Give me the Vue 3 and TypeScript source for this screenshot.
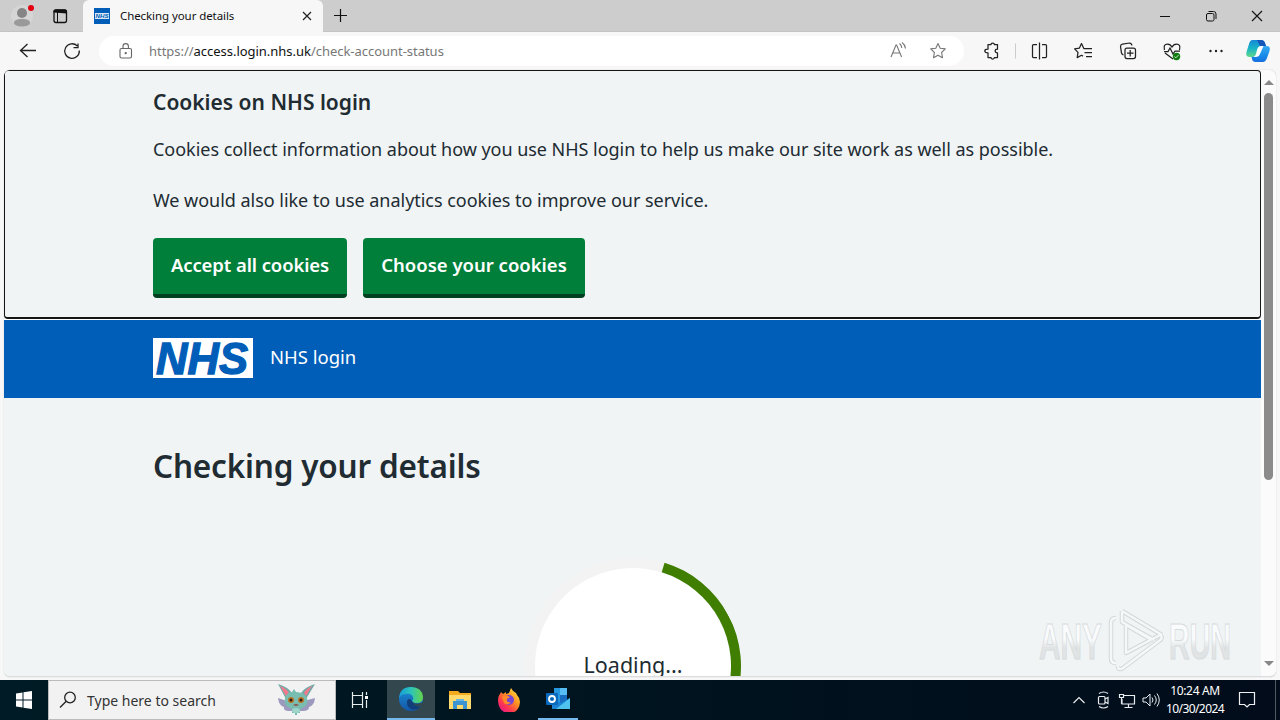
<script setup lang="ts">
interface Choice { label: string; cls: string }
const choices: Choice[] = [
  { label: 'Accept all cookies', cls: 'accept' },
  { label: 'Choose your cookies', cls: 'choose' },
]
</script>

<template>
  <div class="screen">
    <header class="tabs">
      <svg class="profile" width="83" height="32" viewBox="0 0 83 32">
        <circle cx="22" cy="16" r="11" fill="#dadada" opacity=".6" />
        <circle cx="22" cy="13" r="5" fill="#858585" />
        <path d="M14 23c0-3 3-4 8-4s8 1 8 4c0 2-4 3.500-8 3.500S14 25 14 23z" fill="#9a9a9a" />
        <circle cx="31" cy="8" r="3" fill="#e3000f" />
        <rect x="54" y="10" width="12.500" height="12.500" rx="2" fill="none" stroke="#111" stroke-width="1.300" />
        <path d="M53.500 12.500V11q0-1.500 2-1.500h9.500q2 0 2 1.500v2.500z" fill="#111" />
        <path d="M57.500 12v10" stroke="#111" />
      </svg>
      <div class="tab">
        <svg width="16" height="16" viewBox="0 0 16 16">
          <rect width="16" height="16" fill="#005eb8" />
          <rect x="1" y="5" width="14" height="6" fill="#dbe9f6" />
          <text x="1.500" y="10.300" class="mini" textLength="13" lengthAdjust="spacingAndGlyphs">NHS</text>
        </svg>
        <span class="tab-title">Checking your details</span>
        <svg class="close" width="10" height="10" viewBox="0 0 10 10"><path d="M1 1l8 8M9 1L1 9" stroke="#222" stroke-width="1.200" /></svg>
      </div>
      <svg class="plus" width="15" height="15" viewBox="0 0 15 15"><path d="M7.500 1v13M1 7.500h13" stroke="#111" stroke-width="1.200" /></svg>
      <svg class="winctl" width="120" height="32" viewBox="1160 0 120 32" fill="none" stroke="#111">
        <path d="M1160 16.500h10" />
        <rect x="1206.500" y="13.500" width="7.500" height="7.500" rx="1.500" />
        <path d="M1208.500 11.500h5q2.500 0 2.500 2.500v5" />
        <path d="M1252 11l10 10M1262 11l-10 10" stroke-width="1.100" />
      </svg>
    </header>

    <nav class="toolbar">
      <svg class="navicons" width="99" height="38" viewBox="0 32 99 38" fill="none" stroke="#222" stroke-width="1.300">
        <path d="M36 50.500H21M27.500 44l-7 6.500 7 6.500" />
        <path d="M77.300 46a7.300 7.300 0 1 0 2 4.500M78 43.500v4.200h-4.500" />
      </svg>
      <div class="address">
        <svg width="14" height="16" viewBox="0 0 14 16" fill="none" stroke="#666" stroke-width="1.100">
          <rect x="1" y="5.500" width="11.500" height="9.500" rx="1.500" />
          <path d="M4 5.500V3.300a2.700 2.700 0 0 1 5.400 0v2.200" />
          <circle cx="6.700" cy="10.200" r=".6" fill="#666" />
        </svg>
        <span class="url">https://<b>access.login.nhs.uk</b>/check-account-status</span>
        <svg class="readstar" width="60" height="22" viewBox="888 40 60 22" fill="none" stroke="#777" stroke-width="1.100">
          <path d="M891 57l5-12h.6l5 12M893 53h7M899.500 43.500q2 1.500 2.300 4.500M902 42.500q3 2 3.500 6" />
          <path d="M938 43.500l2.200 4.700 5.100.7-3.700 3.600.9 5.200-4.500-2.500-4.500 2.500.9-5.200-3.700-3.600 5.100-.7z" stroke-linejoin="round" />
        </svg>
      </div>
      <svg class="actions" width="316" height="38" viewBox="964 32 316 38" fill="none" stroke="#222" stroke-width="1.250">
        <defs>
          <linearGradient id="cp1" x1="0" y1="0" x2="0" y2="1"><stop stop-color="#1688d8" /><stop offset=".5" stop-color="#19b5c6" /><stop offset="1" stop-color="#62d889" /></linearGradient>
          <linearGradient id="cp2" x1="0" y1="0" x2="0" y2="1"><stop stop-color="#38a9f4" /><stop offset=".6" stop-color="#168be8" /><stop offset="1" stop-color="#176fe0" /></linearGradient>
        </defs>
        <path d="M988 44.500h3q0-1.500 1.700-1.500t1.700 1.500h3.100v4.700q-2.300 0-2.300 1.800t2.300 1.800v4.700h-3.100q0 1.500-1.700 1.500t-1.700-1.500h-3v-4.700q-3.200 0-3.200-1.800t3.200-1.800z" stroke-linejoin="round" />
        <path d="M1015.500 43.500v15" stroke="#ccc" stroke-width="1" />
        <path d="M1037 44.500h-3.500q-1 0-1 1v11q0 1 1 1h3.500M1042 44.500h3.500q1 0 1 1v11q0 1-1 1H1042M1039.500 42.500v17" />
        <path d="M1088 48.500h-4.200l-2.300-4.900-2.200 4.600-4.700.7 3.400 3.500-.8 5.200 4.300-2.300 1.500.8M1086 48.500h6M1084.500 52.500h7.500M1086 56.500h6" stroke-linejoin="round" />
        <rect x="1125" y="48" width="10.500" height="10.500" rx="2" /><path d="M1130.200 50v6.500M1127 53.200h6.500M1123.500 55q-1.500-.5-2-2l-1-6.500q0-2 2-2.300l7-1.200q2 0 2.500 2.500" />
        <path d="M1164.500 50q-1.500-6 3-6 3 0 4.500 3 1.500-3 4.500-3 4.500 0 3 6M1165 53l8 6M1164 51.500h4l2-3.500 3 6 2-3h5" />
        <circle cx="1176.500" cy="56.500" r="3.700" fill="#107c10" stroke="none" /><path d="M1174.500 56.500l1.300 1.400 2.700-2.800" stroke="#fff" stroke-width=".8" />
        <g fill="#222" stroke="none"><circle cx="1210.500" cy="51" r="1.200" /><circle cx="1216" cy="51" r="1.200" /><circle cx="1221.500" cy="51" r="1.200" /></g>
        <g stroke="none">
          <path d="M1252.500 40h8.500q3 0 4 3l1 3h-5q-2 0-3 3l-2 6q-1 2-4 2h-2q-5 0-3.500-5l2.500-8q1-4 3.500-4z" fill="url(#cp1)" />
          <path d="M1257 40h4q3 0 4 3l1 3h-6z" fill="#1656b9" />
          <path d="M1263.500 46h3q4.500 0 3 5l-2.500 7q-1.500 4-4 4h-7.500q-3 0-3.500-3l-.5-2q4 0 5-3l2-6q1-2 5-2z" fill="url(#cp2)" />
          <path d="M1257 50q1-4 4.500-4h2l-3.500 8q-1 3-4.500 3h-2q2-1 2.500-3z" fill="#fff" />
        </g>
      </svg>
    </nav>

    <section class="view">
      <main class="page">
        <div class="cookies">
          <h2>Cookies on NHS login</h2>
          <p class="p1">Cookies collect information about how you use NHS login to help us make our site work as well as possible.</p>
          <p class="p2">We would also like to use analytics cookies to improve our service.</p>
          <div class="buttons">
            <button v-for="c in choices" :key="c.cls" :class="c.cls">{{ c.label }}</button>
          </div>
        </div>
        <div class="brand">
          <svg width="100" height="40" viewBox="0 0 100 40">
            <rect width="100" height="40" fill="#fff" />
            <text x="3" y="36" class="nhs" textLength="92" lengthAdjust="spacingAndGlyphs">NHS</text>
          </svg>
          <span>NHS login</span>
        </div>
        <h1>Checking your details</h1>
        <div class="loader"><div class="ring"></div><span>Loading...</span></div>
      </main>
      <aside class="scroll">
        <i class="up"></i><i class="thumb"></i><i class="down"></i>
      </aside>
    </section>

    <svg class="mark" width="200" height="68" viewBox="1036 606 200 68">
      <defs>
        <linearGradient id="wm" x1="0" y1="0" x2="0" y2="1"><stop offset=".45" stop-color="#f9fbfc" /><stop offset=".6" stop-color="#e1e4e5" /></linearGradient>
      </defs>
      <text x="1039" y="659" textLength="63" lengthAdjust="spacingAndGlyphs">ANY</text>
      <text x="1169" y="659" textLength="62" lengthAdjust="spacingAndGlyphs">RUN</text>
      <path d="M1122 611l40 24M1122 611v11l32 18M1126 625v28l34-18q4 3-1 6l-36 27q-5 3-5-2M1126 625l24 14M1116 618q-5 0-5 5v36q0 4 5 4" fill="none" stroke="#d3d8da" stroke-width="4.500" stroke-linejoin="round" />
      <path d="M1122 611l40 24M1122 611v11l32 18M1126 625v28l34-18q4 3-1 6l-36 27q-5 3-5-2M1126 625l24 14M1116 618q-5 0-5 5v36q0 4 5 4" fill="none" stroke="#f5f8f9" stroke-width="2.500" stroke-linejoin="round" />
    </svg>

    <footer class="taskbar">
      <svg class="start" width="48" height="40" viewBox="0 680 48 40"><path d="M16 693.500l6.500-1v7H16zM23.500 692.300l8.500-1.200v8.400h-8.500zM16 700.500h6.500v7l-6.500-1zM23.500 700.500H32v8.400l-8.500-1.200z" fill="#fff" /></svg>
      <div class="search">
        <svg width="18" height="18" viewBox="0 0 18 18" fill="none" stroke="#222" stroke-width="1.300"><circle cx="11" cy="6.500" r="5.300" /><path d="M7.200 10.300L1 16.500" /></svg>
        <span>Type here to search</span>
        <svg class="creature" width="40" height="34" viewBox="276 684 40 34">
          <path d="M287 702l-9-3q1 8 6 9-1 4 5 4h14q6 0 6-4 5-1 6-9l-11 3z" fill="#9b99bd" />
          <path d="M286 700l-8-15q10 3 14 9zM306 700l9-15q-10 3-14 9z" fill="#73aaa7" />
          <path d="M286 697l-6-10q7 3 9 7zM306 697l6-10q-6 3-8 7z" fill="#f3798c" />
          <path d="M285 699q2-6 7-6l2-3 2 3q8 0 11 6 2 6-3 9-3 2-4 2v4h-3v2h-2v-2h-3v-4q-9-3-7-11z" fill="#79bcb0" />
          <circle cx="291" cy="701" r="3" fill="#b97427" /><circle cx="301" cy="701" r="3" fill="#b97427" />
          <circle cx="291" cy="701" r="1.500" fill="#321b15" /><circle cx="301" cy="701" r="1.500" fill="#321b15" />
          <path d="M293 706q3-2 6 0l-3 1z" fill="#8f514b" /><ellipse cx="296" cy="711.500" rx="4" ry="2.500" fill="#a0d5cb" />
        </svg>
      </div>
      <svg width="51" height="40" viewBox="336 680 51 40" fill="none" stroke="#e7eced" stroke-width="1.200"><path d="M352.500 692v3.500h10V692M352.500 708v-3.500h10v3.500M352.500 695.500v9M362.500 695.500v9M366.500 692v3M366.500 700v8" /><rect x="365" y="696" width="3" height="3" fill="#fff" stroke="none" /></svg>
      <div class="app active">
        <svg width="26" height="26" viewBox="0 0 26 26">
          <defs>
            <linearGradient id="eg" x1="0" x2="1"><stop stop-color="#169dd8" /><stop offset=".5" stop-color="#2cc4b8" /><stop offset="1" stop-color="#66d44a" /></linearGradient>
            <linearGradient id="eb" x1="0" y1="0" x2="0" y2="1"><stop stop-color="#1b91d8" /><stop offset="1" stop-color="#1456a8" /></linearGradient>
          </defs>
          <circle cx="13" cy="13" r="12" fill="url(#eb)" />
          <path d="M1 12Q2 1 13 1q11 0 12 10 0 6-6 6-4 0-5-2 2-2 1-4-2-4-7-3-5 0-7 4z" fill="url(#eg)" />
          <path d="M14 15q-3-4-5 0-1 5 4 8 6 2 10-3-6 2-9-5z" fill="#123f79" /><path d="M14 15q2 4 9 2l3-1v4l-2-.500q-7 3-10-4.500z" fill="#33474f" />
        </svg>
      </div>
      <div class="app">
        <svg width="22" height="18" viewBox="0 0 22 18"><path d="M0 0h9l2 2h11v16H0z" fill="#f5a91d" /><path d="M0 4h22v14H0z" fill="#ffd96b" /><path d="M4 10h14v8h-4v-4H8v4H4z" fill="#3e94d1" /><path d="M7 10V8h8v2" fill="#65b4e6" /></svg>
      </div>
      <div class="app">
        <svg width="24" height="24" viewBox="0 0 24 24">
          <defs><linearGradient id="ff" x1="1" y1="0" x2=".2" y2="1"><stop stop-color="#fff44f" /><stop offset=".45" stop-color="#ff9220" /><stop offset=".75" stop-color="#ff3750" /><stop offset="1" stop-color="#e31587" /></linearGradient></defs>
          <path d="M3 6l1-2 2 2 3-2v2l3-1 2-5q2 4 5 5l1 2q3 3 3 7-1 11-11 11T1 13q0-5 2-7z" fill="url(#ff)" />
          <circle cx="12" cy="12" r="5" fill="#7545d5" /><path d="M5 9q4-3 8 0l-3 2q-1 4 4 3-3 4-7 1z" fill="#ff8a27" />
        </svg>
      </div>
      <div class="app outlook">
        <svg width="26" height="24" viewBox="0 0 26 24"><path d="M9 1h13v15H9z" fill="#2697df" /><path d="M15 1h7v7h-7z" fill="#55bdf1" /><path d="M15 8h7v8h-7z" fill="#176cc0" /><path d="M7 11l9 5 9-5v11H7z" fill="#1a83d5" /><path d="M25 11v11H11z" fill="#4fc3ee" /><rect x="1" y="6" width="12" height="12" rx="1" fill="#0969bd" /><circle cx="7" cy="12" r="3" fill="none" stroke="#fff" stroke-width="1.800" /></svg>
      </div>
      <svg class="tray" width="92" height="40" viewBox="1070 680 92 40" fill="none" stroke="#e8ecef" stroke-width="1.200">
        <path d="M1073.500 703l5.500-5.500 5.500 5.500" />
        <rect x="1098.500" y="696.500" width="6.500" height="7.500" rx="1" /><path d="M1105 699l3-1.500v6l-3-1.500M1099 693.500q4.500-3 9 0M1099 706.500q4.500 3 9 0" />
        <path d="M1124 695.500h10.500v8.500H1122v-5M1128.500 704v3M1124.500 707.500h8M1119.500 694.500h4v3h-4zM1121.500 698v6" />
        <path d="M1143 698h3l4-4v12l-4-4h-3zM1152 697.500q2 2.500 0 5M1154.500 695.500q3.500 4.500 0 9M1157 693.500q4.500 6.500 0 13" stroke-width="1" />
      </svg>
      <div class="clock"><span>10:24 AM</span><span class="date">10/30/2024</span></div>
      <svg class="notice" width="52" height="40" viewBox="1228 680 52 40" fill="none" stroke="#f0f0f0" stroke-width="1.200"><path d="M1239.500 692.500h15v12h-5l-2.500 2.500-2.500-2.500h-5z" /><path d="M1275.500 680v40" stroke="#4c5961" stroke-width="1" /></svg>
    </footer>
  </div>
</template>

<style>
body { overflow: hidden; }
</style>
<style scoped>
* { box-sizing: border-box; }
svg { display: block; flex: none; }
.screen { position: relative; width: 1280px; height: 720px; overflow: hidden; display: flex; flex-direction: column; background: #f7f7f7; font-family: "Noto Sans", "Open Sans", sans-serif; white-space: nowrap; color: #212b32; }
.tabs { height: 32px; display: flex; align-items: center; background: #cdcdcd; border-bottom: 1px solid #c3c3c3; }
.tab { width: 240px; height: 32px; background: #f7f7f7; display: flex; align-items: center; padding-left: 11px; border-radius: 6px 6px 0 0; align-self: flex-start; }
.mini { font: italic bold 6px "Liberation Sans", sans-serif; fill: #005eb8; }
.tab-title { margin-left: 10px; width: 182px; font-size: 11.5px; letter-spacing: -.08px; line-height: 18px; padding-bottom: 1px; color: #111; }
.plus { margin-left: 10px; }
.winctl { margin-left: auto; }
.toolbar { height: 38px; display: flex; }
.address { width: 865px; height: 30px; margin-top: 4px; border-radius: 15px; background: #fff; display: flex; align-items: center; padding: 0 16px 0 20px; }
.url { margin-left: 16px; font-size: 13px; letter-spacing: -.03px; color: #777; }
.url b { font-weight: 400; color: #111; }
.readstar { margin-left: auto; }
.view { display: flex; width: 1272px; height: 607px; margin-left: 4px; background: #fbfbfb; border-radius: 6px; border-bottom: 1px solid #ddd; overflow: hidden; box-shadow: 0 0 1px #aaa; }
.page { width: 1257px; height: 606px; background: #f0f4f5; overflow: hidden; flex: none; }
.cookies { height: 249px; padding: 16px 149px 0 148px; border: 1px solid #151515; border-bottom-width: 2px; border-radius: 4px; }
h1, h2, p { margin: 0; }
h2 { font-size: 21px; font-weight: 600; line-height: 30px; letter-spacing: -.01px; }
p { font-size: 18px; line-height: 28px; letter-spacing: -.03px; }
.p1 { margin-top: 18px; }
.p2 { margin-top: 23px; }
.buttons { display: flex; gap: 16px; margin-top: 24px; }
button { height: 60px; padding: 0 0 4px; border: 0; border-bottom: 4px solid #00401e; border-radius: 4px; background: #007f3b; color: #fff; font: 600 18.5px "Noto Sans", sans-serif; }
.accept { width: 194px; letter-spacing: -.1px; }
.choose { width: 222px; }
.brand { height: 79px; border-top: 1px solid #fff; background: #005eb8; color: #fff; display: flex; align-items: center; padding: 0 0 2px 149px; }
.brand span { margin-left: 17px; font-size: 18.5px; line-height: 28px; padding-bottom: 3px; }
.nhs { font: italic bold 45px "Liberation Sans", sans-serif; fill: #005eb8; stroke: #005eb8; stroke-width: 1.3px; }
h1 { margin: 44px 0 0 149px; font-size: 31.5px; letter-spacing: -.18px; line-height: 48px; font-weight: 600; }
.loader { width: 216px; height: 216px; margin: 68px 0 0 521px; display: grid; place-items: center; }
.ring, .loader span { grid-area: 1 / 1; }
.ring { width: 216px; height: 216px; border: 10px solid #f3f3f3; border-right-color: #3f7e00; border-radius: 50%; background: #fff; transform: rotate(-28deg); }
.loader span { z-index: 1; font-size: 21.5px; line-height: 24px; padding-bottom: 3px; color: #212b32; }
.scroll { width: 15px; display: flex; flex-direction: column; align-items: center; padding: 10px 0 10px; }
.scroll i { display: block; border: 5px solid transparent; width: 0; height: 0; }
.scroll .up { border-top: 0; border-bottom-color: #888; }
.scroll .thumb { width: 9px; height: 387px; border: 0; border-radius: 5px; background: #8b8b8b; margin-top: 8px; }
.scroll .down { border-bottom: 0; border-top-color: #888; margin-top: auto; }
.mark { position: absolute; left: 1036px; top: 606px; }
.mark text { font: bold 50px "Liberation Sans", sans-serif; fill: url(#wm); stroke: #d6dadc; stroke-width: 1px; }
.taskbar { margin-top: auto; height: 40px; display: flex; align-items: center; background: linear-gradient(90deg, #001b25, #00121d 60%, #020c1b); }
.search { width: 288px; height: 40px; background: #f2f2f2; border: 1px solid #bbb; display: flex; align-items: center; color: #333; padding-left: 10px; }
.search span { font-size: 14px; margin-left: 10px; }
.creature { margin-left: auto; margin-right: 19px; }
.app { width: 49px; height: 40px; display: flex; align-items: center; justify-content: center; }
.active { width: 48px; background: #33474f; border-bottom: 2px solid #76b9ed; }
.outlook { width: 40px; margin-left: 5px; border-bottom: 2px solid #76b9ed; }
.tray { margin-left: auto; }
.clock { width: 66px; height: 36px; display: flex; flex-direction: column; align-items: center; color: #fff; font: 12px/18px "Noto Sans", sans-serif; letter-spacing: -.35px; }
.clock .date { letter-spacing: -.6px; }
</style>
